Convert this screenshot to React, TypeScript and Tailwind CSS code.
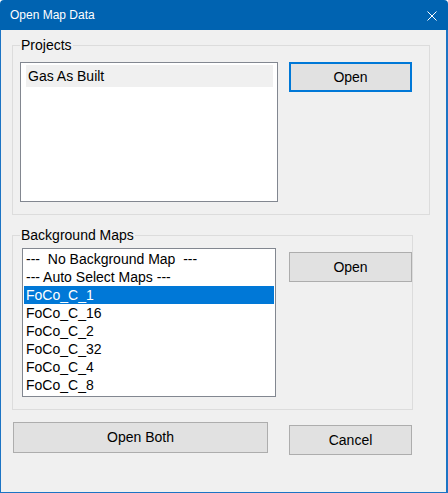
import type { FC, ReactNode } from 'react';

const backgroundMaps = [
  '---  No Background Map  ---',
  '--- Auto Select Maps ---',
  'FoCo_C_1',
  'FoCo_C_16',
  'FoCo_C_2',
  'FoCo_C_32',
  'FoCo_C_4',
  'FoCo_C_8',
];

const Button: FC<{ children: ReactNode; className?: string; focused?: boolean }> = ({
  children,
  className = '',
  focused,
}) => (
  <button
    type="button"
    className={`flex items-center justify-center bg-[#e1e1e1] text-black text-[14px] ${
      focused ? 'border-2 border-[#0078d7]' : 'border border-[#adadad]'
    } ${className}`}
  >
    {children}
  </button>
);

const GroupBox: FC<{ label: string; className?: string; children: ReactNode }> = ({
  label,
  className = '',
  children,
}) => (
  <fieldset className={`border border-[#dcdcdc] ${className}`}>
    <legend className="ml-[7px] px-[1px] text-[14px] leading-[16px] text-black">{label}</legend>
    {children}
  </fieldset>
);

const App: FC = () => {
  return (
    <div className="w-[448px] h-[493px] flex flex-col font-['Liberation_Sans',Arial,sans-serif] select-none">
      {/* title bar */}
      <div className="h-[30px] shrink-0 flex items-center justify-between bg-[#0063b1] rounded-t-[4px] pl-[10px] pr-[11px]">
        <span className="text-white text-[12px] leading-none">Open Map Data</span>
        <svg width="10" height="10" viewBox="0 0 10 10" className="mt-[1px]">
          <path d="M0.5 0.5 L9.5 9.5 M9.5 0.5 L0.5 9.5" stroke="#fff" strokeWidth="1" />
        </svg>
      </div>

      {/* body */}
      <div className="h-[463px] bg-[#f0f0f0] border-l border-r-2 border-b border-[#1c74c4] pl-[11px] flex flex-col items-start">
        <GroupBox label="Projects" className="mt-[7px] w-[418px] pt-[9px] pb-[12px]">
          <div className="flex items-start pl-[7px]">
            <ul className="w-[258px] h-[140px] bg-white border border-[#828790] pl-[5px] pr-[4px] pt-[2px]">
              <li className="h-[22px] bg-[#f0f0f0] pl-[2px] flex items-center text-[14px] text-black">
                Gas As Built
              </li>
            </ul>
            <Button focused className="ml-[11px] w-[123px] h-[30px]">
              Open
            </Button>
          </div>
        </GroupBox>

        <GroupBox label="Background Maps" className="mt-[12px] w-[401px] pt-[5px] pb-[12px]">
          <div className="flex items-start pl-[9px]">
            <ul className="w-[254px] h-[149px] bg-white border border-[#828790] px-[1px] pt-[1px] overflow-hidden">
              {backgroundMaps.map((name, i) => (
                <li
                  key={name}
                  className={`h-[18px] leading-[18px] pl-[2px] text-[14px] whitespace-pre ${
                    i === 2 ? 'bg-[#0078d7] text-white' : 'text-black'
                  }`}
                >
                  {name}
                </li>
              ))}
            </ul>
            <Button className="ml-[13px] mt-[4px] w-[123px] h-[30px]">Open</Button>
          </div>
        </GroupBox>

        <div className="mt-[12px] ml-[1px] flex items-start">
          <Button className="w-[255px] h-[31px]">Open Both</Button>
          <Button className="ml-[21px] mt-[3px] w-[123px] h-[30px]">Cancel</Button>
        </div>
      </div>
    </div>
  );
};

export default App;
